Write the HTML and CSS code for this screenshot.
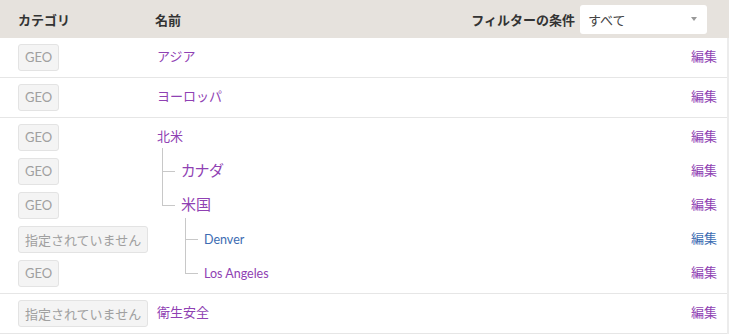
FILE: index.html
```html
<!DOCTYPE html>
<html lang="ja">
<head>
  <meta charset="UTF-8" />
  <meta name="viewport" content="width=device-width, initial-scale=1.0" />
  <title>カテゴリ一覧</title>
  <link rel="stylesheet" href="styles.css">
</head>
<body>
  <div class="head">
    <div class="col-cat">カテゴリ</div>
    <div class="col-name">名前</div>
    <div class="filter">
      <span class="filter-label">フィルターの条件</span>
      <div class="select">
        <span>すべて</span>
        <span class="caret"></span>
      </div>
    </div>
  </div>

  <div class="list">
    <div class="row">
      <div class="line">
        <div class="col-cat"><span class="badge">GEO</span></div>
        <div class="name"><a href="#">アジア</a></div>
        <a class="edit" href="#">編集</a>
      </div>
    </div>

    <div class="row">
      <div class="line">
        <div class="col-cat"><span class="badge">GEO</span></div>
        <div class="name"><a href="#">ヨーロッパ</a></div>
        <a class="edit" href="#">編集</a>
      </div>
    </div>

    <div class="row">
      <div class="line">
        <div class="col-cat"><span class="badge">GEO</span></div>
        <div class="name stub-1"><a href="#">北米</a></div>
        <a class="edit" href="#">編集</a>
      </div>
      <div class="line">
        <div class="col-cat"><span class="badge">GEO</span></div>
        <div class="name"><span class="elbow"></span><a class="lvl-1" href="#">カナダ</a></div>
        <a class="edit" href="#">編集</a>
      </div>
      <div class="line">
        <div class="col-cat"><span class="badge">GEO</span></div>
        <div class="name stub-2"><span class="elbow last"></span><a class="lvl-1" href="#">米国</a></div>
        <a class="edit" href="#">編集</a>
      </div>
      <div class="line">
        <div class="col-cat"><span class="badge">指定されていません</span></div>
        <div class="name"><span class="indent"></span><span class="elbow"></span><a class="lvl-2 fresh" href="#">Denver</a></div>
        <a class="edit fresh" href="#">編集</a>
      </div>
      <div class="line">
        <div class="col-cat"><span class="badge">GEO</span></div>
        <div class="name"><span class="indent"></span><span class="elbow last"></span><a class="lvl-2" href="#">Los Angeles</a></div>
        <a class="edit" href="#">編集</a>
      </div>
    </div>

    <div class="row">
      <div class="line">
        <div class="col-cat"><span class="badge">指定されていません</span></div>
        <div class="name"><a href="#">衛生安全</a></div>
        <a class="edit" href="#">編集</a>
      </div>
    </div>
  </div>
</body>
</html>
```

FILE: styles.css
```css
body {
  margin: 0;
  font-family: Lato, 'Noto Sans CJK JP', sans-serif;
  font-size: 13px;
  color: #333;
  background: #fff;
}
a {
  color: #8f41b3;
  text-decoration: none;
}
a.fresh {
  color: #3c6cb2;
}
.head {
  display: flex;
  align-items: center;
  height: 38px;
  background: #e6e2dd;
  font-weight: bold;
  color: #333;
}
.head .col-cat {
  width: 137px;
}
.col-cat {
  flex: none;
  width: 139px;
  padding-left: 18px;
}
.col-name {
  flex: 1;
}
.filter {
  display: flex;
  align-items: center;
  gap: 5px;
  padding-right: 22px;
}
.select {
  display: flex;
  align-items: center;
  justify-content: space-between;
  width: 127px;
  height: 29px;
  box-sizing: border-box;
  padding: 0 10px 0 8px;
  background: #fff;
  border-radius: 3px;
  font-weight: normal;
  color: #444;
}
.caret {
  width: 0;
  height: 0;
  border-left: 3px solid transparent;
  border-right: 3px solid transparent;
  border-top: 4px solid #999;
}
.list {
  border-right: 2px solid #ececec;
}
.row {
  padding: 2px 0 3px;
  border-bottom: 1px solid #e6e6e6;
}
.line {
  display: flex;
  align-items: stretch;
  height: 34px;
}
.line .col-cat {
  display: flex;
  align-items: center;
}
.badge {
  display: inline-flex;
  align-items: center;
  height: 27px;
  box-sizing: border-box;
  padding: 0 6px;
  background: #f4f4f4;
  border: 1px solid #e3e3e3;
  border-radius: 3px;
  color: #a0a0a0;
}
.name {
  flex: 1;
  display: flex;
  align-items: center;
  background-repeat: no-repeat;
}
.name a,
.edit {
  line-height: 1;
  margin-bottom: 2px;
}
.stub-1 {
  background-image: linear-gradient(#c8c8c8, #c8c8c8);
  background-position: 5px 100%;
  background-size: 1px 6px;
}
.stub-2 {
  background-image: linear-gradient(#c8c8c8, #c8c8c8);
  background-position: 28px 100%;
  background-size: 1px 4px;
}
.elbow {
  flex: none;
  align-self: stretch;
  width: 13px;
  margin: 0 6px 0 5px;
  background:
    linear-gradient(#c8c8c8, #c8c8c8) no-repeat 0 0 / 1px 100%,
    linear-gradient(#c8c8c8, #c8c8c8) no-repeat 0 50% / 13px 1px;
}
.elbow.last {
  background-size: 1px calc(50% + 1px), 13px 1px;
}
.indent {
  flex: none;
  width: 23px;
}
.lvl-1 {
  font-size: 15px;
  font-feature-settings: "palt";
}
.name .lvl-2 {
  font-size: 12.5px;
  margin-bottom: -2px;
}
.edit {
  align-self: center;
  padding-right: 10px;
}
```
